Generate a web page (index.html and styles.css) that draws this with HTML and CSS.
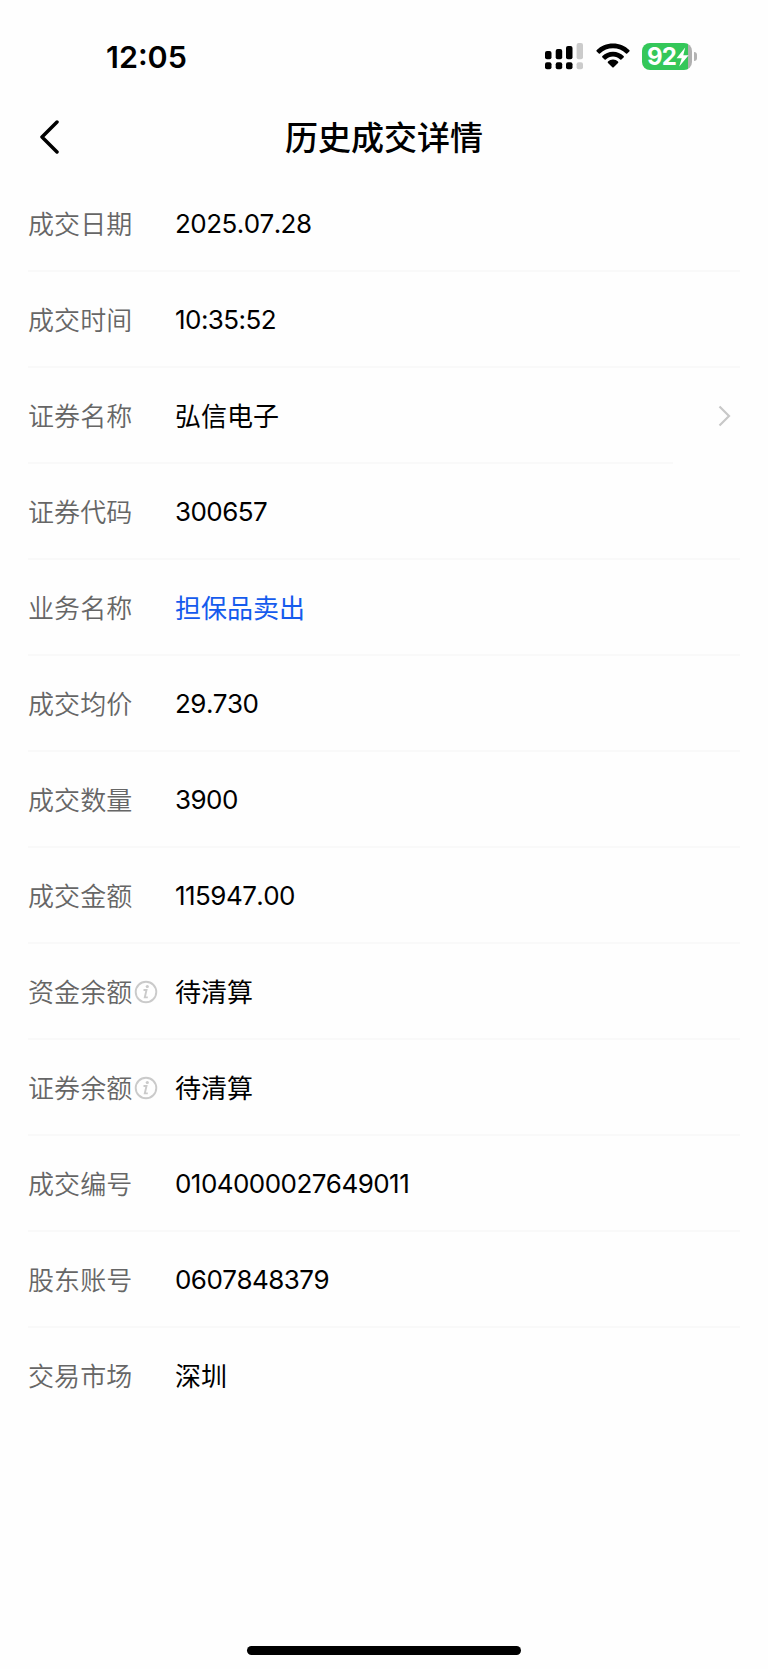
FILE: index.html
```html
<!DOCTYPE html>
<html lang="zh-CN">
<head>
<meta charset="utf-8">
<title>历史成交详情</title>
<link rel="stylesheet" href="styles.css">
</head>
<body>
<div class="screen">
  <div class="status">
    <span class="time">12:05</span>
    <div class="indicators">
      <svg class="signal" width="38" height="27" viewBox="0 0 38 27">
        <rect x="0" y="8" width="6.5" height="8.3" rx="2"/><rect x="10.7" y="6" width="6.5" height="10.3" rx="2"/><rect x="21" y="3" width="6.5" height="13.3" rx="2"/>
        <rect x="0" y="19.3" width="6.5" height="7" rx="2"/><rect x="10.7" y="19.3" width="6.5" height="7" rx="2"/><rect x="21" y="19.3" width="6.5" height="7" rx="2"/>
        <rect class="dim" x="31.6" y="0" width="6.4" height="16.3" rx="2"/><rect class="dim" x="31.6" y="19.3" width="6.4" height="7" rx="2"/>
      </svg>
      <svg class="wifi" width="34" height="25" viewBox="0 0 34 25">
        <path d="M17 0.5C23.500 .5 29.300 3 33.300 7.100C33.800 7.600 33.800 8 33.300 8.500L31.200 10.500C30.800 10.900 30.400 10.900 30 10.500C26.500 7 22 5.200 17 5.200S7.500 7 4 10.500C3.600 10.900 3.200 10.900 2.800 10.500L.7 8.500C.2 8 .2 7.600 .7 7.100C4.700 3 10.500 .5 17 .5Z"/>
        <path d="M17 8.700C21.200 8.700 24.900 10.300 27.600 13C28.100 13.500 28.100 13.900 27.600 14.400L25.400 16.500C25 16.900 24.600 16.900 24.200 16.500C22.200 14.500 19.700 13.400 17 13.400S11.800 14.500 9.800 16.500C9.400 16.900 9 16.900 8.600 16.500L6.400 14.400C5.900 13.900 5.900 13.500 6.400 13C9.100 10.300 12.800 8.700 17 8.700Z"/>
        <path d="M17 16.600C19 16.600 20.700 17.400 22 18.600C22.500 19.100 22.500 19.500 22 20L17.700 24.200C17.200 24.700 16.800 24.700 16.300 24.200L12 20C11.500 19.500 11.500 19.100 12 18.600C13.300 17.400 15 16.600 17 16.600Z"/>
      </svg>
      <div class="battery">
        <div class="cell"><span class="percent">92</span>
          <svg class="bolt" width="13" height="20" viewBox="0 0 13 20"><path d="M9.200 .6L.5 11.200H5.700L3.200 19.400L12.600 8.300H7.300Z"/></svg>
        </div>
        <div class="cap"></div>
      </div>
    </div>
  </div>
  <header class="header">
    <svg class="back" width="19" height="34" viewBox="0 0 19 34"><path d="M17 2L2 17L17 32"/></svg>
    <h1 class="title">历史成交详情</h1>
  </header>
  <main class="list">
    <div class="row"><span class="label">成交日期</span><span class="value num">2025.07.28</span></div>
    <div class="row"><span class="label">成交时间</span><span class="value num">10:35:52</span></div>
    <div class="row row-link"><span class="label">证券名称</span><span class="value">弘信电子</span>
      <svg class="chevron" width="13" height="22" viewBox="0 0 13 22"><path d="M1.500 1.500L11 11L1.500 20.500"/></svg></div>
    <div class="row"><span class="label">证券代码</span><span class="value num">300657</span></div>
    <div class="row"><span class="label">业务名称</span><span class="value blue">担保品卖出</span></div>
    <div class="row"><span class="label">成交均价</span><span class="value num">29.730</span></div>
    <div class="row"><span class="label">成交数量</span><span class="value num">3900</span></div>
    <div class="row"><span class="label">成交金额</span><span class="value num">115947.00</span></div>
    <div class="row"><span class="label">资金余额<svg class="info" width="24" height="24" viewBox="0 0 24 24"><circle cx="12" cy="12" r="10.300"/><path d="M9.500 10H12.500L10.800 17.400H13.800"/><circle class="dot" cx="13.300" cy="6.500" r="1.600"/></svg></span><span class="value">待清算</span></div>
    <div class="row"><span class="label">证券余额<svg class="info" width="24" height="24" viewBox="0 0 24 24"><circle cx="12" cy="12" r="10.300"/><path d="M9.500 10H12.500L10.800 17.400H13.800"/><circle class="dot" cx="13.300" cy="6.500" r="1.600"/></svg></span><span class="value">待清算</span></div>
    <div class="row"><span class="label">成交编号</span><span class="value num">0104000027649011</span></div>
    <div class="row"><span class="label">股东账号</span><span class="value num">0607848379</span></div>
    <div class="row"><span class="label">交易市场</span><span class="value">深圳</span></div>
  </main>
  <div class="home"></div>
</div>
</body>
</html>
```
FILE: styles.css
```css
* { box-sizing: border-box; }
body {
  margin: 0;
  background: #fefefe;
  color: #000;
  font-family: Inter, "Noto Sans CJK SC", sans-serif;
}
.screen {
  display: flex;
  flex-direction: column;
  width: 768px;
  height: 1669px;
  padding-bottom: 14px;
}
.status {
  display: flex;
  justify-content: space-between;
  height: 98px;
  padding: 37px 71px 0 106px;
}
.time {
  font-size: 30.500px;
  font-weight: 600;
  line-height: 40px;
}
.indicators { display: flex; padding-top: 6px; }
.signal { margin-right: 13px; }
.dim { fill: #cbcbcb; }
.wifi { margin-right: 12px; }
.battery { display: flex; align-items: center; height: 27px; }
.cell {
  display: flex;
  align-items: center;
  width: 50px;
  height: 27px;
  padding-left: 5px;
  border-radius: 8px;
  background: linear-gradient(90deg, #34c759 92%, #b0b0b0 92%);
}
.percent {
  color: #fff;
  font-size: 24px;
  font-weight: 700;
  line-height: 27px;
  letter-spacing: -0.8px;
}
.bolt { flex: none; fill: #fff; }
.cap {
  width: 3px;
  height: 9px;
  margin-left: 2px;
  border-radius: 0 4px 4px 0;
  background: #b3b3b3;
}
.header {
  display: grid;
  grid-template-columns: 60px 1fr 60px;
  align-items: center;
  height: 78px;
  padding: 0 40px;
}
.back { fill: none; stroke: #000; stroke-width: 3.500; stroke-linecap: round; stroke-linejoin: round; }
.title {
  margin: 0;
  padding-top: 1px;
  font-size: 33px;
  font-weight: 500;
  line-height: 48px;
  text-align: center;
}
.list { padding: 0 28px; }
.row {
  display: flex;
  align-items: center;
  height: 96px;
  font-size: 26px;
  line-height: 38px;
  background: linear-gradient(#f9f9f9, #f9f9f9) left bottom / 100% 2px no-repeat;
}
.row:last-child { background: none; }
.row-link { background-size: 645px 2px; }
.label {
  display: flex;
  align-items: center;
  width: 147px;
  padding-top: 1px;
  color: #666;
  font-weight: 350;
  letter-spacing: 0.1px;
}
.value { padding-top: 1px; white-space: nowrap; }
.num { padding-top: 0; letter-spacing: -0.55px; font-kerning: none; font-feature-settings: "calt" 0; }
.blue { color: #155bed; }
.info { margin: -1px 0 0 2px; fill: none; stroke: #cacaca; stroke-width: 1.900; }
.dot { fill: #cacaca; stroke: none; }
.chevron { margin-left: auto; margin-right: 9px; fill: none; stroke: #c8c8c8; stroke-width: 2.200; }
.home {
  width: 274px;
  height: 9px;
  margin: auto auto 0;
  border-radius: 5px;
  background: #000;
}
```
